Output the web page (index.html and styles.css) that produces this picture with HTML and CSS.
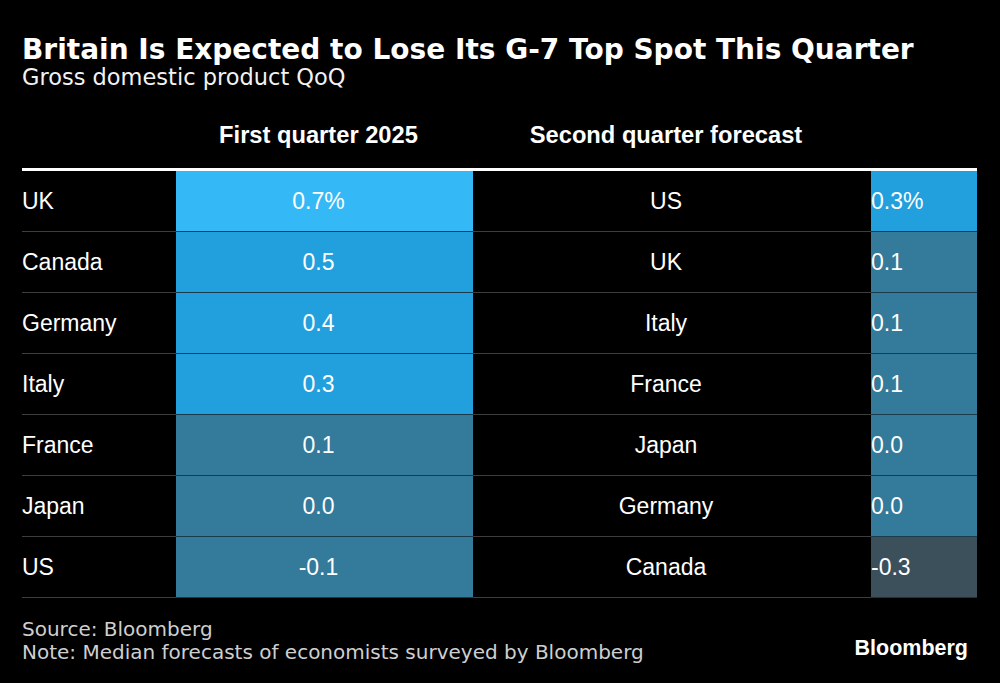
FILE: index.html
```html
<!DOCTYPE html>
<html>
<head>
<meta charset="utf-8">
<link rel="stylesheet" href="styles.css">
</head>
<body>
<div class="chart">
  <h1 class="title">Britain Is Expected to Lose Its G-7 Top Spot This Quarter</h1>
  <div class="subtitle">Gross domestic product QoQ</div>

  <div class="table">
    <div class="th"></div>
    <div class="th c2">First quarter 2025</div>
    <div class="th c3">Second quarter forecast</div>
    <div class="th"></div>

    <div class="td c1">UK</div><div class="td c2 v-hi">0.7%</div><div class="td c3">US</div><div class="td c4 v-md">0.3%</div>
    <div class="td c1">Canada</div><div class="td c2 v-md">0.5</div><div class="td c3">UK</div><div class="td c4 v-lo">0.1</div>
    <div class="td c1">Germany</div><div class="td c2 v-md">0.4</div><div class="td c3">Italy</div><div class="td c4 v-lo">0.1</div>
    <div class="td c1">Italy</div><div class="td c2 v-md">0.3</div><div class="td c3">France</div><div class="td c4 v-lo">0.1</div>
    <div class="td c1">France</div><div class="td c2 v-lo">0.1</div><div class="td c3">Japan</div><div class="td c4 v-lo">0.0</div>
    <div class="td c1">Japan</div><div class="td c2 v-lo">0.0</div><div class="td c3">Germany</div><div class="td c4 v-lo">0.0</div>
    <div class="td c1">US</div><div class="td c2 v-lo">-0.1</div><div class="td c3">Canada</div><div class="td c4 v-neg">-0.3</div>
  </div>

  <div class="footer">
    <div class="notes">
      <div>Source: Bloomberg</div>
      <div>Note: Median forecasts of economists surveyed by Bloomberg</div>
    </div>
    <div class="logo">Bloomberg</div>
  </div>
</div>
</body>
</html>
```

FILE: styles.css
```css
html, body {
  margin: 0;
  padding: 0;
  background: #000;
}

.chart {
  width: 1000px;
  height: 683px;
  box-sizing: border-box;
  padding: 36px 23px 0 22px;
  color: #fff;
}

.title {
  margin: 0;
  font-family: "DejaVu Sans", Verdana, sans-serif;
  font-weight: bold;
  font-size: 28px;
  line-height: 28px;
  color: #fff;
}

.subtitle {
  margin-top: 2px;
  font-family: "DejaVu Sans", Verdana, sans-serif;
  font-size: 22.5px;
  line-height: 22px;
  color: #f2f2f2;
}

.table {
  margin-top: 14px;
  display: grid;
  grid-template-columns: 154px 297px 398px 106px;
  font-family: "Liberation Sans", Arial, sans-serif;
  font-size: 23px;
}

.th {
  height: 69px;
  border-bottom: 3px solid #fff;
  display: flex;
  align-items: center;
  justify-content: center;
  font-weight: bold;
  font-size: 23.7px;
  padding-right: 12px;
  box-sizing: border-box;
}

.td {
  height: 61px;
  box-sizing: border-box;
  border-bottom: 1px solid #3d3d3d;
  display: flex;
  align-items: center;
  color: #fff;
}

.c1 {
  justify-content: flex-start;
}

.c2, .c3 {
  justify-content: center;
  padding-right: 12px;
}

.c4 {
  justify-content: flex-start;
}

.v-hi {
  background: #35b9f6;
  border-bottom-color: #1a3b4c;
}

.v-md {
  background: #22a0dd;
  border-bottom-color: #1a3b4c;
}

.v-lo {
  background: #337a9b;
  border-bottom-color: #1a3b4c;
}

.v-neg {
  background: #3c505c;
  border-bottom-color: #2a2f33;
}

.footer {
  margin-top: 20px;
  display: flex;
  justify-content: space-between;
  align-items: flex-end;
}

.notes {
  font-family: "DejaVu Sans", Verdana, sans-serif;
  font-size: 20px;
  line-height: 23px;
  color: #cfcfcf;
}

.logo {
  font-family: "Liberation Sans", Arial, sans-serif;
  font-weight: bold;
  font-size: 21.5px;
  line-height: 26px;
  color: #fff;
  margin-right: 9px;
  margin-bottom: 3px;
}
```
